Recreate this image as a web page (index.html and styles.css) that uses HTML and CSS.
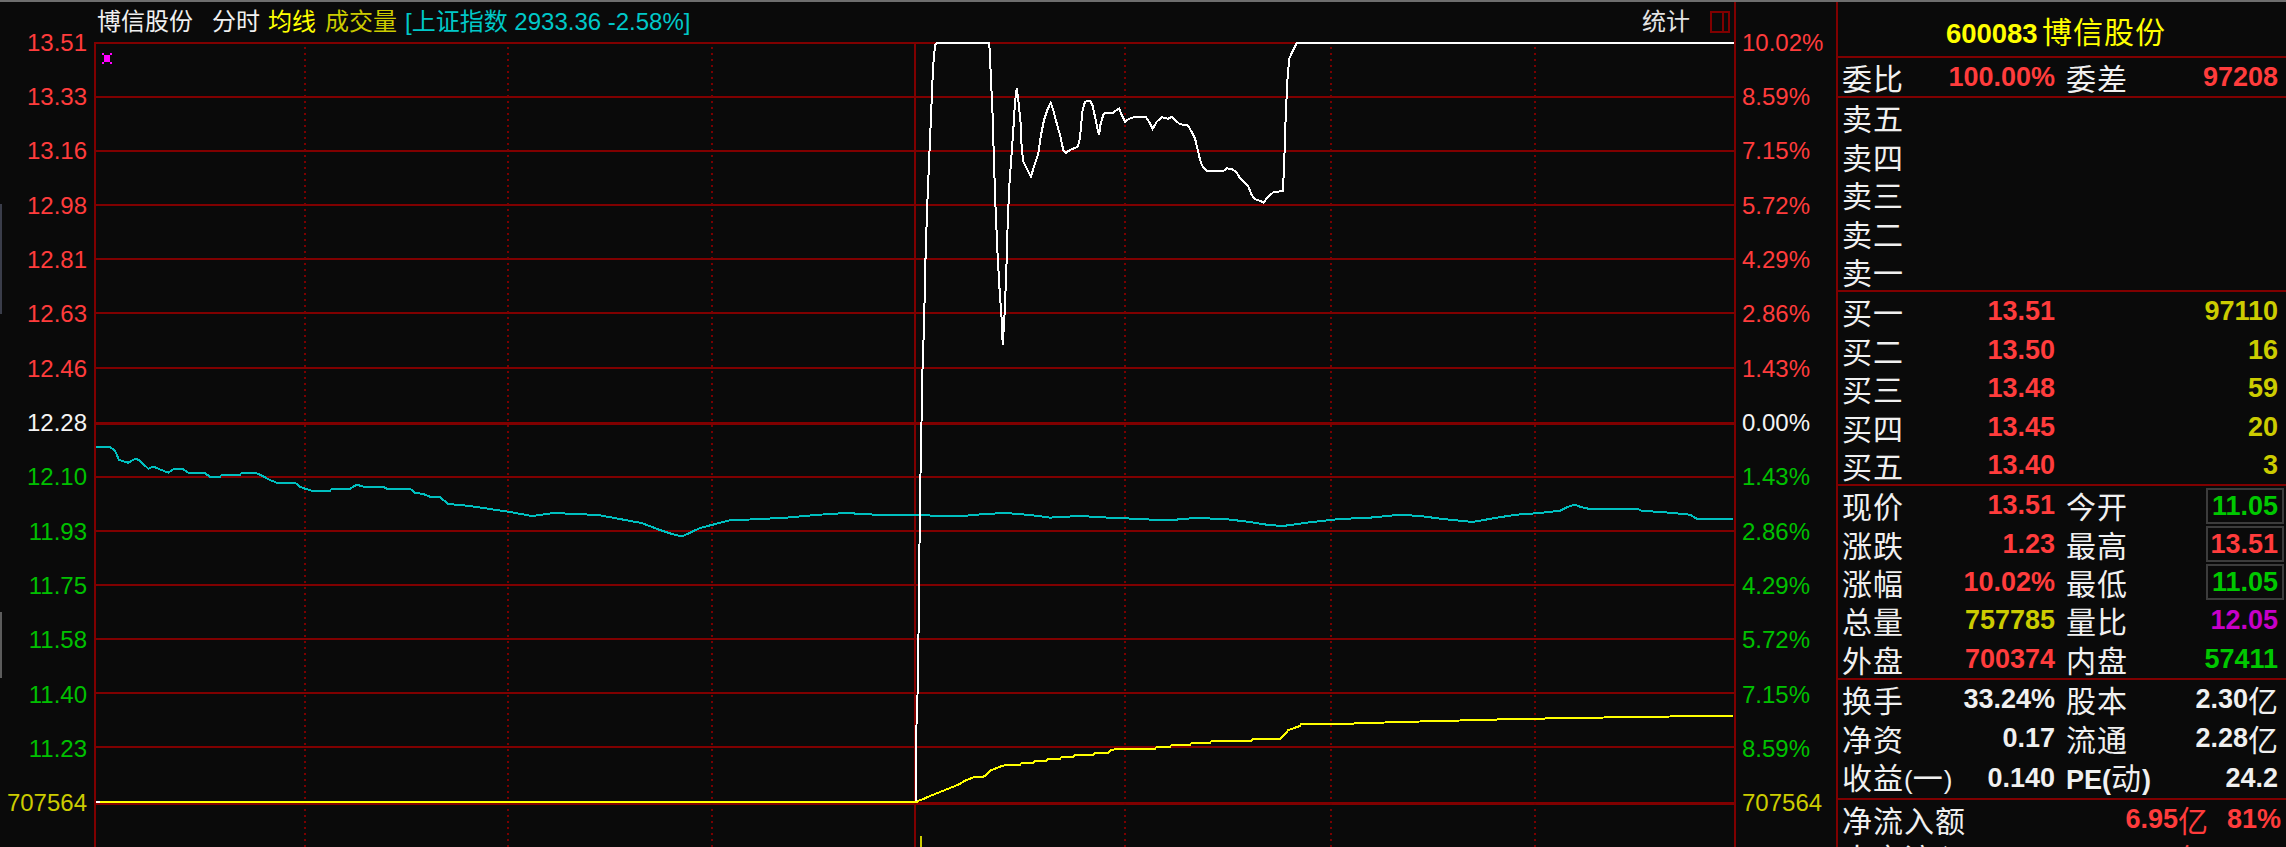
FILE: index.html
```html
<!DOCTYPE html>
<html lang="zh-CN">
<head>
<meta charset="utf-8">
<title>博信股份 分时走势</title>
<link rel="stylesheet" href="styles.css">
</head>
<body>
<div class="screen">
  <div class="edge-mark edge-mark-a"></div>
  <div class="edge-mark edge-mark-b"></div>

  <div class="axis axis-left">
    <div class="tick up">13.51</div>
    <div class="tick up">13.33</div>
    <div class="tick up">13.16</div>
    <div class="tick up">12.98</div>
    <div class="tick up">12.81</div>
    <div class="tick up">12.63</div>
    <div class="tick up">12.46</div>
    <div class="tick eq">12.28</div>
    <div class="tick dn">12.10</div>
    <div class="tick dn">11.93</div>
    <div class="tick dn">11.75</div>
    <div class="tick dn">11.58</div>
    <div class="tick dn">11.40</div>
    <div class="tick dn">11.23</div>
    <div class="tick vol">707564</div>
  </div>

  <div class="chart-col">
    <div class="chart-head">
      <span class="t-name">博信股份</span>
      <span class="t-mode">分时</span>
      <span class="t-avg">均线</span>
      <span class="t-vol">成交量</span>
      <span class="t-idx">[上证指数 2933.36 -2.58%]</span>
      <span class="t-stat">统计</span>
      <svg class="t-icon" width="20" height="22" viewBox="0 0 20 22" shape-rendering="crispEdges">
        <rect x="1" y="1" width="18" height="20" fill="none" stroke="#800000" stroke-width="2"/>
        <line x1="13" y1="2" x2="13" y2="20" stroke="#800000" stroke-width="2"/>
      </svg>
    </div>
    <svg class="chart" width="1640" height="805" viewBox="0 0 1640 805">
      <g transform="translate(-94 -42)" shape-rendering="crispEdges" fill="none">
        <g stroke="#800000" stroke-width="2">
          <line x1="96" y1="97" x2="1734" y2="97"/>
          <line x1="96" y1="151" x2="1734" y2="151"/>
          <line x1="96" y1="205" x2="1734" y2="205"/>
          <line x1="96" y1="259" x2="1734" y2="259"/>
          <line x1="96" y1="313" x2="1734" y2="313"/>
          <line x1="96" y1="368" x2="1734" y2="368"/>
          <line x1="96" y1="477" x2="1734" y2="477"/>
          <line x1="96" y1="531" x2="1734" y2="531"/>
          <line x1="96" y1="585" x2="1734" y2="585"/>
          <line x1="96" y1="639" x2="1734" y2="639"/>
          <line x1="96" y1="693" x2="1734" y2="693"/>
          <line x1="96" y1="747" x2="1734" y2="747"/>
          <line x1="94" y1="43" x2="1734" y2="43"/>
          <line x1="95" y1="43" x2="95" y2="847"/>
          <line x1="915" y1="43" x2="915" y2="847"/>
        </g>
        <line x1="96" y1="423.5" x2="1734" y2="423.5" stroke="#800000" stroke-width="3"/>
        <line x1="96" y1="803.5" x2="1734" y2="803.5" stroke="#800000" stroke-width="3.5"/>
        <g stroke="#7a0000" stroke-width="2" stroke-dasharray="2 4">
          <line x1="305" y1="47" x2="305" y2="847"/>
          <line x1="508" y1="47" x2="508" y2="847"/>
          <line x1="712" y1="47" x2="712" y2="847"/>
          <line x1="1125" y1="47" x2="1125" y2="847"/>
          <line x1="1331" y1="47" x2="1331" y2="847"/>
          <line x1="1535" y1="47" x2="1535" y2="847"/>
        </g>

        <polyline stroke="#00c0c0" stroke-width="2" points="96,446.7 109.3,446.7 115,450.7 119,460 125,461.7 128.3,462.7 131.7,460.7 136,458.7 140,460.7 144,464.7 148.3,468.7 153.3,466.7 158.3,468.7 163.3,470.7 168.3,472.7 173.3,469.3 183.3,469.3 188.3,472.7 205,473.3 210,476.7 220,476.7 221.7,474.7 240,474.7 241.7,472.7 255,472.7 260,474.7 265,477.3 270,480 276.7,482.7 295,482.7 300,486.7 305,488.7 311.7,490.7 330,490.7 331.7,488.7 350,488.7 356.7,484.7 363.3,486.7 383.3,486.7 386.7,488.7 410,488.7 415,492.7 423.3,494 430,496.7 440,497.3 448.3,504 470,506 490,509 510,512 532,516 554,513 598,515 641.5,523 660,530 670.7,533.6 682,536.5 700,528 729,520.5 760,519 787,517.6 815,515 845.6,513 875,514.7 914,514.7 940,516 962,516 985,514 1006,513 1030,515 1050,517.6 1080,516 1108,517.6 1140,519 1166,520.5 1195,518 1225,519 1250,522 1268.5,525 1283,526 1312,522 1340,519 1370.5,517.6 1400,514.7 1420,516 1443,519 1472.6,522 1495,518 1516,514.7 1540,513 1560,510.7 1568.3,506.7 1575,504.7 1580,506.7 1588.3,508.7 1636.7,508.7 1641.7,510.7 1670,512.7 1690,514.7 1696.7,518.7 1733,518.7"/>

        <polyline stroke="#ffffff" stroke-width="2" points="96,802 916,802 916,740 918,680 920,500 922.7,360 924,328 925.3,265 927,211.7 929,163.3 931,116.7 933,68.3 935,45 937.3,43 989.3,43 992.7,116.7 994,163.3 995.7,211.7 997.7,256.7 999.7,291.7 1001.7,320 1002.7,345 1004.3,320 1006.3,271.7 1007.7,223.3 1009.3,185.7 1011.3,158.3 1013.3,130 1015,101.7 1016.7,88.3 1018.3,100 1020.7,124 1021.7,148.3 1023.3,161.7 1026.7,168.3 1031,176.7 1035,163.3 1038.3,153.3 1040.7,136.7 1044,120 1047.3,110 1050.7,102.7 1053.3,110 1056.7,123.3 1060,135 1063.3,150 1066,152.7 1070,150 1077.7,146.7 1080,138.3 1082.3,111.7 1085,101.7 1090,100.7 1092.7,106 1095,116.7 1097.3,128.3 1099,135 1100.7,123.3 1103.3,115 1105,112.7 1113.3,112.7 1116.7,110 1119.3,108.3 1121.7,115 1125,121.7 1128.3,119.3 1133.3,117.3 1146,117.3 1150,123.3 1152.7,128.7 1156.7,121.7 1161.7,117.3 1168.3,118.7 1171.7,116.7 1175,120 1180,124.3 1187.7,125.3 1191.7,131.7 1195,138.3 1197.3,148.3 1199.3,156.7 1201.7,165 1206.7,171 1223.3,171 1226.7,168.3 1231.7,169 1236.7,172.3 1240,178.3 1245,183.3 1248.3,186.7 1251.7,195 1255,199.3 1260,200.7 1263.3,202.7 1268.3,196.7 1273.3,192.3 1282.7,191 1284,170 1285.3,126.7 1287.3,81.7 1289.3,58.3 1293.3,50 1296.7,43 1735,43"/>

        <polyline stroke="#ffff00" stroke-width="2" points="100,802 917,802 918,801 923.3,799 928.3,796.7 933.3,794.7 938.3,792.7 943.3,790.7 948.3,788.7 953.3,786.7 958.3,784.7 965,780.7 970,778.7 975,776.7 983.3,776.7 986.7,774.7 990,770.7 995,768.7 1000,766.7 1006.7,764.7 1020,764.7 1021.7,762.7 1033.3,762.7 1035,760.7 1046.7,760.7 1048.3,758.7 1060,758.7 1061.7,756.7 1073.3,756.7 1075,754.7 1093.3,754.7 1095,752.7 1108.3,752.7 1110,750.7 1116.7,748.7 1155,748.7 1156.7,746.7 1170,746.7 1171.7,744.7 1190,744.7 1191.7,742.7 1210,742.7 1211.7,740.7 1251.7,740.7 1253.3,738.7 1280,738.7 1282.7,736.7 1285,734 1288.3,730 1293.3,728.3 1300,726 1300.7,724.3 1330,724.3 1400,722 1460,720.5 1516,719 1604,717.5 1670,716.5 1733,716"/>

        <rect x="920" y="836" width="2" height="11" fill="#cccc00"/>

        <g fill="#ff00ff">
          <rect x="104" y="55" width="6" height="7"/>
          <rect x="102" y="53" width="2" height="2"/>
          <rect x="110" y="53" width="2" height="2"/>
          <rect x="102" y="62" width="2" height="2"/>
          <rect x="110" y="62" width="2" height="2"/>
        </g>
      </g>
    </svg>
  </div>

  <div class="axis axis-right">
    <div class="tick up">10.02%</div>
    <div class="tick up">8.59%</div>
    <div class="tick up">7.15%</div>
    <div class="tick up">5.72%</div>
    <div class="tick up">4.29%</div>
    <div class="tick up">2.86%</div>
    <div class="tick up">1.43%</div>
    <div class="tick eq">0.00%</div>
    <div class="tick dn">1.43%</div>
    <div class="tick dn">2.86%</div>
    <div class="tick dn">4.29%</div>
    <div class="tick dn">5.72%</div>
    <div class="tick dn">7.15%</div>
    <div class="tick dn">8.59%</div>
    <div class="tick vol">707564</div>
  </div>

  <div class="quote">
    <div class="q-title"><span class="q-code">600083</span> <span class="q-cname">博信股份</span></div>

    <div class="q-sec">
      <div class="q-row"><span class="lb">委比</span><span class="v red">100.00%</span><span class="lb lb2">委差</span><span class="v red">97208</span></div>
    </div>

    <div class="q-sec">
      <div class="q-row"><span class="lb">卖五</span><span class="v"></span><span class="lb2"></span><span class="v"></span></div>
      <div class="q-row"><span class="lb">卖四</span><span class="v"></span><span class="lb2"></span><span class="v"></span></div>
      <div class="q-row"><span class="lb">卖三</span><span class="v"></span><span class="lb2"></span><span class="v"></span></div>
      <div class="q-row"><span class="lb">卖二</span><span class="v"></span><span class="lb2"></span><span class="v"></span></div>
      <div class="q-row"><span class="lb">卖一</span><span class="v"></span><span class="lb2"></span><span class="v"></span></div>
    </div>

    <div class="q-sec">
      <div class="q-row"><span class="lb">买一</span><span class="v red">13.51</span><span class="lb2"></span><span class="v olive">97110</span></div>
      <div class="q-row"><span class="lb">买二</span><span class="v red">13.50</span><span class="lb2"></span><span class="v olive">16</span></div>
      <div class="q-row"><span class="lb">买三</span><span class="v red">13.48</span><span class="lb2"></span><span class="v olive">59</span></div>
      <div class="q-row"><span class="lb">买四</span><span class="v red">13.45</span><span class="lb2"></span><span class="v olive">20</span></div>
      <div class="q-row"><span class="lb">买五</span><span class="v red">13.40</span><span class="lb2"></span><span class="v olive">3</span></div>
    </div>

    <div class="q-sec">
      <div class="q-row"><span class="lb">现价</span><span class="v red">13.51</span><span class="lb lb2">今开</span><span class="v"><span class="box green">11.05</span></span></div>
      <div class="q-row"><span class="lb">涨跌</span><span class="v red">1.23</span><span class="lb lb2">最高</span><span class="v"><span class="box red">13.51</span></span></div>
      <div class="q-row"><span class="lb">涨幅</span><span class="v red">10.02%</span><span class="lb lb2">最低</span><span class="v"><span class="box green">11.05</span></span></div>
      <div class="q-row"><span class="lb">总量</span><span class="v olive">757785</span><span class="lb lb2">量比</span><span class="v magenta">12.05</span></div>
      <div class="q-row"><span class="lb">外盘</span><span class="v red">700374</span><span class="lb lb2">内盘</span><span class="v green">57411</span></div>
    </div>

    <div class="q-sec q-sec-fin">
      <div class="q-row"><span class="lb">换手</span><span class="v white">33.24%</span><span class="lb lb2">股本</span><span class="v white">2.30<span class="cj">亿</span></span></div>
      <div class="q-row"><span class="lb">净资</span><span class="v white">0.17</span><span class="lb lb2">流通</span><span class="v white">2.28<span class="cj">亿</span></span></div>
      <div class="q-row"><span class="lb">收益<span class="paren">(</span>一<span class="paren">)</span></span><span class="v white">0.140</span><span class="lb lb2"><span class="pe">PE(</span>动<span class="pe">)</span></span><span class="v white">24.2</span></div>
    </div>

    <div class="q-flow">
      <div class="q-frow"><span class="lb">净流入额</span><span class="v red">6.95<span class="cj">亿</span></span><span class="v red">81%</span></div>
      <div class="q-frow"><span class="lb">大宗流入</span><span class="v red">5.11<span class="cj">亿</span></span><span class="v red">86%</span></div>
    </div>
  </div>
</div>
</body>
</html>
```

FILE: styles.css
```css
html, body {
  margin: 0;
  padding: 0;
  background: #0a0a0a;
}

body {
  width: 2286px;
  height: 847px;
  overflow: hidden;
  font-family: "Liberation Sans", "Noto Sans CJK SC", sans-serif;
  color: #f0f0f0;
}

.screen {
  position: relative;
  display: flex;
  width: 2286px;
  height: 847px;
  box-sizing: border-box;
  border-top: 2px solid #6e6e6e;
  overflow: hidden;
  background: #0a0a0a;
}

.edge-mark {
  position: absolute;
  left: 0;
  width: 2px;
}

.edge-mark-a {
  top: 202px;
  height: 110px;
  background: #3a3d4a;
}

.edge-mark-b {
  top: 610px;
  height: 66px;
  background: #5c5c5c;
}

/* axes */
.axis {
  flex: none;
  display: flex;
  flex-direction: column;
  box-sizing: border-box;
  padding-top: 13.84px;
  font-size: 24px;
}

.tick {
  height: 54.32px;
  line-height: 54.32px;
  white-space: nowrap;
}

.axis-left {
  width: 94px;
  padding-right: 7px;
  text-align: right;
}

.axis-right {
  width: 102px;
  border-left: 2px solid #800000;
  padding-left: 6px;
}

.up { color: #ff3c3c; }
.eq { color: #f4f4f4; }
.dn { color: #00c000; }
.vol { color: #cccc00; }

/* chart column */
.chart-col {
  flex: none;
  width: 1640px;
  display: flex;
  flex-direction: column;
}

.chart-head {
  height: 40px;
  display: flex;
  align-items: center;
  padding-left: 3px;
  font-size: 24px;
  line-height: 40px;
  white-space: nowrap;
}

.t-name { color: #f0f0f0; }
.t-mode { color: #f0f0f0; margin-left: 19px; }
.t-avg { color: #ffff00; margin-left: 8px; }
.t-vol { color: #cccc00; margin-left: 9px; }
.t-idx { color: #00c8c8; margin-left: 8px; }
.t-stat { color: #e4e4e4; margin-left: auto; }
.t-icon { margin-left: 20px; margin-right: 4px; flex: none; }

.chart {
  display: block;
  width: 1640px;
  height: 805px;
  flex: none;
}

/* quote panel */
.quote {
  flex: none;
  width: 450px;
  box-sizing: border-box;
  border-left: 2px solid #800000;
}

.q-title {
  height: 51px;
  padding-top: 3px;
  padding-right: 12px;
  line-height: 51px;
  text-align: center;
  color: #ffff00;
  border-bottom: 2px solid #800000;
  white-space: nowrap;
}

.q-code {
  font-size: 27.5px;
  font-weight: bold;
}

.q-cname {
  font-family: "Noto Sans CJK SC", sans-serif;
  font-size: 30px;
  letter-spacing: 1px;
}

.q-sec {
  padding: 0 8px 0 4px;
  border-bottom: 2px solid #800000;
}

.q-sec-fin {
  padding-bottom: 2.4px;
}

.q-row {
  display: grid;
  grid-template-columns: 100px 113px 90px 133px;
  height: 38.4px;
  line-height: 38.4px;
  white-space: nowrap;
}

.lb {
  font-family: "Noto Sans CJK SC", sans-serif;
  font-size: 30px;
  letter-spacing: 1px;
  color: #f0f0f0;
}

.lb2 {
  padding-left: 11px;
}

.paren {
  font-family: "Liberation Sans", sans-serif;
  font-size: 26px;
  letter-spacing: 0;
}

.pe {
  font-family: "Liberation Sans", sans-serif;
  font-size: 27px;
  font-weight: bold;
  letter-spacing: 0;
}

.v {
  display: flex;
  justify-content: flex-end;
  align-items: center;
  font-size: 27px;
  font-weight: bold;
}

.cj {
  font-family: "Noto Sans CJK SC", sans-serif;
  font-weight: normal;
  font-size: 30px;
}

.box {
  display: block;
  width: 78px;
  height: 36px;
  box-sizing: border-box;
  border: 2px solid #3c3c3c;
  padding-right: 4px;
  margin-right: -6px;
  line-height: 32px;
  text-align: right;
}

.red { color: #ff3c3c; }
.green { color: #00c800; }
.olive { color: #cccc00; }
.magenta { color: #c800c8; }
.white { color: #f0f0f0; }

.q-flow {
  padding: 0 5px 0 4px;
}

.q-frow {
  display: grid;
  grid-template-columns: 1fr auto 73px;
  height: 38.4px;
  line-height: 38.4px;
  white-space: nowrap;
}
```
